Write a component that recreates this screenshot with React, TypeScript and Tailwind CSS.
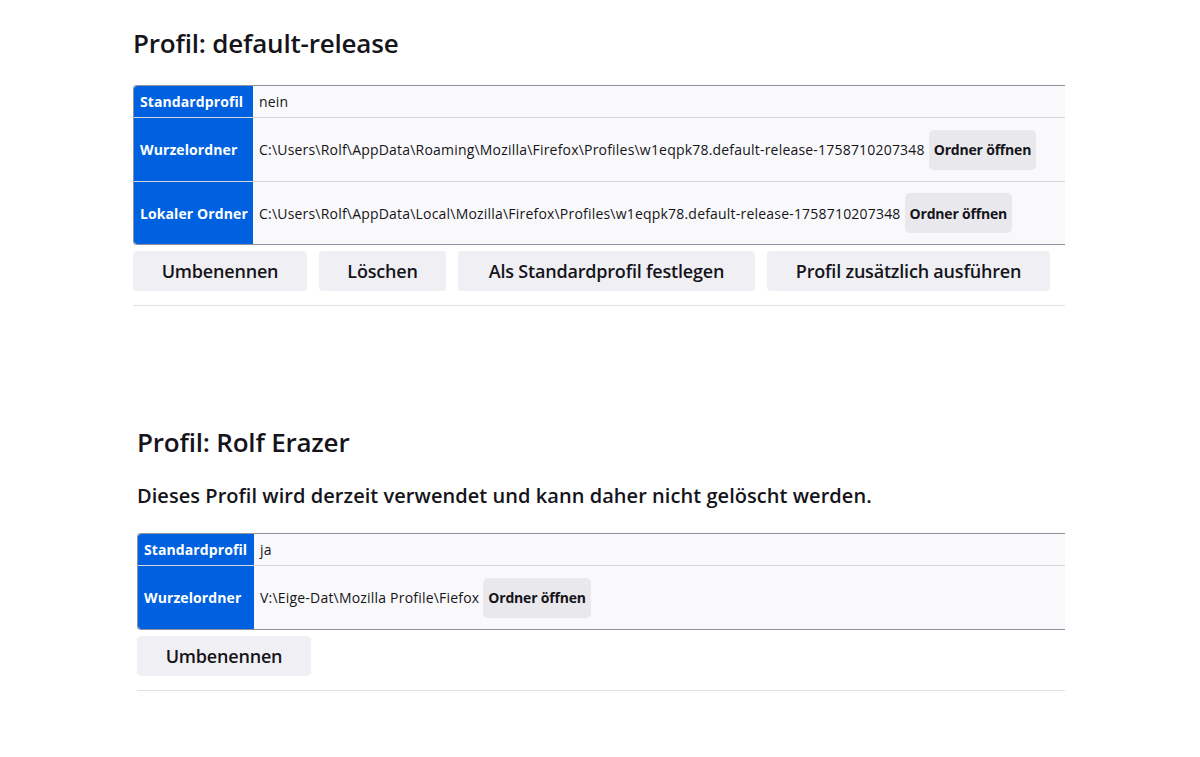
import React from "react";

const font = { fontFamily: '"Open Sans", "Noto Sans", Arial, sans-serif' };

function OpenBtn() {
  return (
    <button className="ml-[4px] h-[40px] px-[5px] rounded-[5px] bg-[#e9e9ed] text-[14px] font-bold text-[#15141a] tracking-[-0.2px]">
      Ordner öffnen
    </button>
  );
}

function Row({
  label,
  children,
  h,
  first,
  last,
  hw,
}: {
  label: string;
  children: React.ReactNode;
  h: string;
  first?: boolean;
  last?: boolean;
  hw: string;
}) {
  return (
    <div className={`flex ${h} ${last ? "" : "border-b border-[#d6d6dc]"}`}>
      <div
        className={`${hw} shrink-0 bg-[#0061e0] text-white text-[14px] font-bold flex items-center px-[6px] whitespace-nowrap tracking-[0.1px] ${
          first ? "rounded-tl-[3px]" : ""
        } ${last ? "rounded-bl-[3px]" : ""}`}
      >
        {label}
      </div>
      <div className="flex-1 bg-[#f9f9fb] flex items-center pl-[6px] text-[14px] text-[#15141a] tracking-[0.2px] whitespace-nowrap">
        {children}
      </div>
    </div>
  );
}

function Btn({ w, children }: { w: string; children: React.ReactNode }) {
  return (
    <button
      className={`${w} h-[40px] rounded-[4px] bg-[#f0f0f4] text-[18px] font-semibold text-[#15141a] tracking-[-0.2px]`}
    >
      {children}
    </button>
  );
}

export default function App() {
  return (
    <div className="w-full h-[757px] bg-white overflow-hidden" style={font}>
      {/* Section 1 */}
      <div className="ml-[133px] w-[932px] pt-[26px]">
        <h1 className="text-[26px] leading-[34px] font-semibold text-[#15141a] tracking-[-0.2px]">
          Profil: default-release
        </h1>
        <div className="mt-[25px] border-y border-l border-[#8f8f9d] rounded-l-[4px] overflow-hidden">
          <Row label="Standardprofil" h="h-[32px]" first hw="w-[119px]">
            nein
          </Row>
          <Row label="Wurzelordner" h="h-[64px]" hw="w-[119px]">
            <span>C:\Users\Rolf\AppData\Roaming\Mozilla\Firefox\Profiles\w1eqpk78.default-release-1758710207348</span>
            <OpenBtn />
          </Row>
          <Row label="Lokaler Ordner" h="h-[62px]" last hw="w-[119px]">
            <span>C:\Users\Rolf\AppData\Local\Mozilla\Firefox\Profiles\w1eqpk78.default-release-1758710207348</span>
            <OpenBtn />
          </Row>
        </div>
        <div className="mt-[6px] flex gap-[12px]">
          <Btn w="w-[174px]">Umbenennen</Btn>
          <Btn w="w-[127px]">Löschen</Btn>
          <Btn w="w-[297px]">Als Standardprofil festlegen</Btn>
          <Btn w="w-[283px]">Profil zusätzlich ausführen</Btn>
        </div>
        <div className="mt-[14px] h-px bg-[#e0e0e6]" />
      </div>

      {/* Section 2 */}
      <div className="ml-[137px] w-[928px] mt-[119px]">
        <h1 className="text-[26px] leading-[34px] font-semibold text-[#15141a] tracking-[-0.2px]">
          Profil: Rolf Erazer
        </h1>
        <p className="mt-[24px] text-[20px] leading-[26px] font-semibold text-[#15141a] tracking-[0.05px]">
          Dieses Profil wird derzeit verwendet und kann daher nicht gelöscht werden.
        </p>
        <div className="mt-[24px] border-y border-l border-[#8f8f9d] rounded-l-[4px] overflow-hidden">
          <Row label="Standardprofil" h="h-[32px]" first hw="w-[116px]">
            ja
          </Row>
          <Row label="Wurzelordner" h="h-[63px]" last hw="w-[116px]">
            <span>V:\Eige-Dat\Mozilla Profile\Fiefox</span>
            <OpenBtn />
          </Row>
        </div>
        <div className="mt-[6px] flex gap-[12px]">
          <Btn w="w-[174px]">Umbenennen</Btn>
        </div>
        <div className="mt-[14px] h-px bg-[#e0e0e6]" />
      </div>
    </div>
  );
}
